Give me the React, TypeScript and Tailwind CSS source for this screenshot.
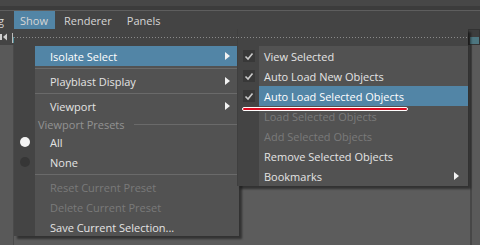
import React from 'react';

const font = { fontFamily: '"Open Sans", "Liberation Sans", sans-serif' };

type Item =
  | { kind: 'item'; label: string; sub?: boolean; active?: boolean; disabled?: boolean; icon?: 'radioOn' | 'radioOff' | 'check' }
  | { kind: 'sep' }
  | { kind: 'label'; label: string };

const mainItems: Item[] = [
  { kind: 'item', label: 'Isolate Select', sub: true, active: true },
  { kind: 'sep' },
  { kind: 'item', label: 'Playblast Display', sub: true },
  { kind: 'sep' },
  { kind: 'item', label: 'Viewport', sub: true },
  { kind: 'label', label: 'Viewport Presets' },
  { kind: 'item', label: 'All', icon: 'radioOn' },
  { kind: 'item', label: 'None', icon: 'radioOff' },
  { kind: 'sep' },
  { kind: 'item', label: 'Reset Current Preset', disabled: true },
  { kind: 'item', label: 'Delete Current Preset', disabled: true },
  { kind: 'item', label: 'Save Current Selection...' },
];

const subItems: Item[] = [
  { kind: 'item', label: 'View Selected', icon: 'check' },
  { kind: 'item', label: 'Auto Load New Objects', icon: 'check' },
  { kind: 'item', label: 'Auto Load Selected Objects', icon: 'check', active: true },
  { kind: 'item', label: 'Load Selected Objects', disabled: true },
  { kind: 'item', label: 'Add Selected Objects', disabled: true },
  { kind: 'item', label: 'Remove Selected Objects' },
  { kind: 'item', label: 'Bookmarks', sub: true },
];

function Arrow() {
  return (
    <svg width="5" height="8" viewBox="0 0 5 8" className="shrink-0">
      <path d="M0 0 L5 4 L0 8 Z" fill="#f2f2f2" />
    </svg>
  );
}

function Gutter({ icon }: { icon?: string }) {
  return (
    <div className="w-[21px] shrink-0 bg-[#444444] flex items-center justify-center">
      {icon === 'radioOn' && <div className="w-[10px] h-[10px] rounded-full bg-[#f4f4f4]" />}
      {icon === 'radioOff' && <div className="w-[10px] h-[10px] rounded-full bg-[#363636]" />}
      {icon === 'check' && (
        <div className="w-[12px] h-[12px] bg-[#383838] flex items-center justify-center">
          <svg width="10" height="9" viewBox="0 0 10 9">
            <path d="M1.5 4.5 L4 7 L8.5 1.5" stroke="#c9c9c9" strokeWidth="1.6" fill="none" />
          </svg>
        </div>
      )}
    </div>
  );
}

function Menu({ items, textPad, arrowPad }: { items: Item[]; textPad: string; arrowPad: string }) {
  return (
    <div className="flex flex-col">
      <div className="h-[17px] bg-[#444444] flex items-center">
        <div className="w-full h-px bg-[repeating-linear-gradient(90deg,#8a8a8a_0_1px,transparent_1px_3px)]" />
      </div>
      {items.map((it, i) => {
        if (it.kind === 'sep') {
          return (
            <div key={i} className="h-[5px] flex">
              <Gutter />
              <div className="flex-1 bg-[#525252] pt-[2px]">
                <div className="h-px bg-[#6a6a6a]" />
              </div>
            </div>
          );
        }
        if (it.kind === 'label') {
          return (
            <div key={i} className="h-[16px] flex">
              <Gutter />
              <div className="flex-1 bg-[#525252] flex items-center pl-[3px]">
                <span className="text-[#929292] whitespace-nowrap">{it.label}</span>
                <div className="flex-1 h-px bg-[#6a6a6a] ml-[9px]" />
              </div>
            </div>
          );
        }
        return (
          <div key={i} className="h-[20px] flex">
            <Gutter icon={it.icon} />
            <div
              className={`flex-1 flex items-center justify-between ${textPad} ${arrowPad} ${
                it.active ? 'bg-[#5285a6] text-white' : 'bg-[#525252]'
              } ${it.disabled ? 'text-[#7a7a7a]' : it.active ? '' : 'text-[#e4e4e4]'}`}
            >
              <span className="whitespace-nowrap">{it.label}</span>
              {it.sub && <Arrow />}
            </div>
          </div>
        );
      })}
    </div>
  );
}

export default function App() {
  return (
    <div className="w-[480px] h-[245px] relative overflow-hidden bg-[#5c5c5c] text-[11px] leading-none" style={font}>
      <div className="h-[6px] bg-[#474747]" />
      <div className="h-[4px] bg-[#3c3c3c]" />
      <div className="h-px bg-[#5e5e5e]" />
      <div className="h-[18px] bg-[#444444] flex items-stretch text-[#d6d6d6]">
        <div className="w-[14px] overflow-hidden flex items-center justify-end">
          <span className="pr-[10px]">g</span>
        </div>
        <div className="w-[41px] bg-[#5285a6] flex items-center pl-[6px]">Show</div>
        <div className="flex items-center pl-[9px]">Renderer</div>
        <div className="flex items-center pl-[15px]">Panels</div>
      </div>
      <div className="h-[16px] bg-[#444444] flex justify-between">
        <div className="w-[14px] flex items-center">
          <svg width="14" height="16" viewBox="0 0 14 16">
            <rect x="0" y="5" width="2" height="6" fill="#cfcfcf" />
            <path d="M7 4.5 L3 8 L7 11.5 Z" fill="#cfcfcf" />
            <rect x="12" y="4" width="1" height="10" fill="#bdbdbd" />
            <rect x="13" y="8" width="1" height="6" fill="#4f8a95" />
          </svg>
        </div>
        <div className="w-[12px] border border-[#333333] bg-[#3d3d3d] flex items-end">
          <div className="w-full h-[7px] ml-[1px] bg-[#4d7680]" />
        </div>
      </div>
      <div className="h-[200px] flex">
        <div className="w-[14px] bg-[#595959] border-r border-[#4a4a4a]" />
        <div className="flex-1" />
        <div className="w-[10px] bg-[#5a5a5a] border-l-2 border-[#474747]" />
      </div>

      <div className="absolute left-[14px] top-[29px] w-[225px] h-[207px] overflow-hidden shadow-[3px_3px_2px_rgba(0,0,0,0.45)] bg-[#525252]">
        <Menu items={mainItems} textPad="pl-[15px]" arrowPad="pr-[9px]" />
      </div>

      <div className="absolute left-[237px] top-[29px] w-[231px] h-[157px] overflow-hidden shadow-[3px_3px_2px_rgba(0,0,0,0.45)] bg-[#525252] border-l border-[#3f3f3f]">
        <Menu items={subItems} textPad="pl-[5px]" arrowPad="pr-[9px]" />
      </div>

      <div className="absolute left-[242px] top-[107px] w-[166px] h-[4px] rounded-full border border-white bg-[#dc0a1e]" />
    </div>
  );
}
